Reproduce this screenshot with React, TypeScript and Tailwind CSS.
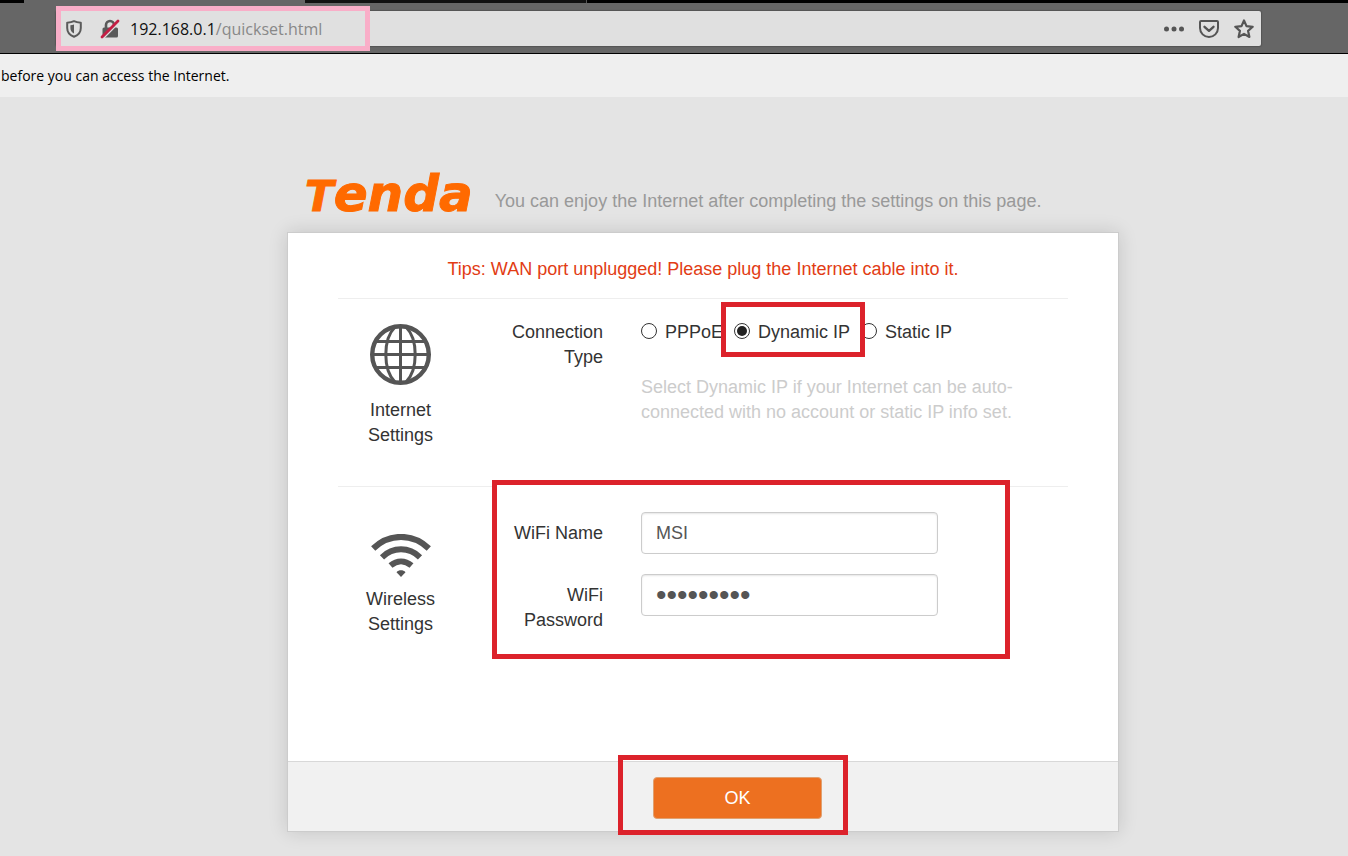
import { useState } from "react";
import type { ReactNode } from "react";

const CONNECTION_TYPES = ["PPPoE", "Dynamic IP", "Static IP"];

function ShieldIcon() {
  return (
    <svg width="16" height="18" viewBox="0 0 16 18" fill="none" aria-hidden="true">
      <path d="M8 1.2C6 2.2 3.8 2.6 1.2 2.7V8c0 4.200 2.600 7.200 6.800 8.800 4.200-1.600 6.800-4.600 6.800-8.800V2.700C12.200 2.600 10 2.200 8 1.200Z" stroke="#5a5a5a" strokeWidth="2" strokeLinejoin="round" />
      <path d="M8 4.500v9c-2.400-1.300-3.600-3.100-3.600-5.500V5.300C5.700 5.200 6.900 4.900 8 4.500Z" fill="#5a5a5a" />
    </svg>
  );
}

function InsecureLockIcon() {
  return (
    <svg width="20" height="20" viewBox="0 0 20 20" fill="none" aria-hidden="true">
      <path d="M6 9V6a4 4 0 0 1 8 0v3" stroke="#5a5a5a" strokeWidth="2.600" />
      <rect x="2.500" y="8.500" width="15.500" height="10" rx="1.500" fill="#5a5a5a" />
      <path d="M3 19.700 19.700 3" stroke="#e0e0e0" strokeWidth="1.600" />
      <path d="M2 18 18 2" stroke="#c41e44" strokeWidth="2.800" strokeLinecap="round" />
    </svg>
  );
}

function PocketIcon() {
  return (
    <svg width="20" height="18" viewBox="0 0 20 18" fill="none" stroke="#555" strokeWidth="2" strokeLinecap="round" strokeLinejoin="round" aria-hidden="true">
      <path d="M2 1h16c.6 0 1 .4 1 1V8a9 9 0 0 1-18 0V2c0-.6.4-1 1-1Z" />
      <path d="m5.500 6.800 4.500 4 4.500-4" strokeWidth="2.400" />
    </svg>
  );
}

function StarIcon() {
  return (
    <svg width="20" height="20" viewBox="0 0 20 20" fill="none" stroke="#555" strokeWidth="2.200" strokeLinejoin="round" aria-hidden="true">
      <path d="m10 1.500 2.500 5.600 6.200.7-4.600 4.100 1.300 6.100L10 14.900 4.600 18l1.300-6.100L1.300 7.800l6.200-.7Z" />
    </svg>
  );
}

function GlobeIcon() {
  return (
    <svg width="61" height="61" viewBox="0 0 61 61" fill="none" stroke="#555" strokeWidth="3" aria-hidden="true">
      <circle cx="30.500" cy="30.500" r="28.300" strokeWidth="4.400" />
      <path d="M30.500 2v57M2 30.500h57M6 17.500h49M6 43.500h49" />
      <path d="M25 3C18 10 15.800 20 15.800 30.500S18 51 25 58M36 3c7 7 9.200 17 9.200 27.500S43 51 36 58" />
    </svg>
  );
}

function WifiIcon() {
  return (
    <svg width="60" height="43" viewBox="0 0 60 43" fill="none" stroke="#555" strokeWidth="6" aria-hidden="true">
      <path d="M2.200 14.500C18-1 42-1 57.800 14.500" />
      <path d="M11 23.300c11-10.600 27-10.600 38 0" />
      <path d="M19.500 31.500c6.500-5.500 14.500-5.500 21 0" />
      <path d="M25.500 38.300c2.300-2.600 6.700-2.600 9 0L30 43Z" fill="#555" stroke="none" />
    </svg>
  );
}

function Highlight({ className }: { className: string }) {
  return <span aria-hidden="true" className={`pointer-events-none absolute border-5 ${className}`} />;
}

function BrowserBar() {
  return (
    <header className="border-b border-black bg-[#666]">
      <div className="flex h-[3px]">
        <div className="w-6 bg-black" />
        <div className="w-[281px]" />
        <div className="w-[282px] border-r border-[#555] bg-[#111]" />
        <div className="flex-1 bg-black" />
      </div>
      <div className="pt-2 pr-[87px] pb-[7px] pl-14">
        <div className="relative flex h-[35px] items-center rounded-xs bg-[#e0e0e0] pr-[7px] pl-2.5 shadow-[0_0_1px_1px_#555]">
          <Highlight className="-top-[5px] left-0 h-[45px] w-[314px] border-[#f9aec8]" />
          <ShieldIcon />
          <div className="ml-[18px] flex">
            <InsecureLockIcon />
          </div>
          <p className="ml-2.5 flex-1 pt-px font-['Open_Sans','Noto_Sans',sans-serif] text-base text-[#111]">
            192.168.0.1<span className="text-[#888]">/quickset.html</span>
          </p>
          <div className="flex items-center gap-[15px]">
            <button aria-label="Page actions" className="flex">
              <svg width="20" height="6" viewBox="0 0 20 6" fill="#555" aria-hidden="true">
                <circle cx="2.500" cy="3" r="2.500" />
                <circle cx="10" cy="3" r="2.500" />
                <circle cx="17.500" cy="3" r="2.500" />
              </svg>
            </button>
            <button aria-label="Save to Pocket" className="flex"><PocketIcon /></button>
            <button aria-label="Bookmark this page" className="flex"><StarIcon /></button>
          </div>
        </div>
      </div>
    </header>
  );
}

function Section({ icon, title, children }: { icon: ReactNode; title: ReactNode; children: ReactNode }) {
  return (
    <section className="mx-[50px] flex border-t border-[#eee]">
      <div className="flex w-[125px] shrink-0 flex-col items-center text-center">
        {icon}
        <h2>{title}</h2>
      </div>
      {children}
    </section>
  );
}

export default function App() {
  const [connection, setConnection] = useState("Dynamic IP");
  const [wifiName, setWifiName] = useState("MSI");
  const [wifiPassword, setWifiPassword] = useState("123456789");

  return (
    <div className="min-h-screen bg-[#e4e4e4] font-['Liberation_Sans',Arial,sans-serif] text-lg/[25px] text-[#333]">
      <BrowserBar />

      <div className="bg-[#efefef] px-px py-[11px] font-['Open_Sans','Noto_Sans',sans-serif] text-sm/[21px] text-black">
        before you can access the Internet.
      </div>

      <main className="pt-[68px] pb-6 pl-[58px]">
        <div className="mx-auto max-w-[832px]">
          {/* Logo and intro */}
          <div className="flex items-start gap-[22px] pl-[18px]">
            <h1 className="font-['DejaVu_Sans',sans-serif] text-[50px]/[58px] font-bold text-[#ff6a00] italic [-webkit-text-stroke:1px_#ff6a00]">
              <span className="text-[42px]/[42px]">T</span>enda
            </h1>
            <p className="pt-6 text-[#999]">You can enjoy the Internet after completing the settings on this page.</p>
          </div>

          <form
            onSubmit={(e) => e.preventDefault()}
            className="mt-[9px] border border-[#ccc] bg-white shadow-[0_0_18px_rgba(0,0,0,0.14)]"
          >
            <p className="pt-6 pb-4 text-center text-[#e23c14]">
              Tips: WAN port unplugged! Please plug the Internet cable into it.
            </p>

            <Section
              icon={<div className="pt-[25px] pb-[13px]"><GlobeIcon /></div>}
              title={<>Internet<br />Settings</>}
            >
              <fieldset className="flex flex-1 pt-[21px] pb-[61px]">
                <div className="mr-[38px] ml-10 w-[100px] shrink-0 text-right" id="connection-type">
                  Connection Type
                </div>
                <div className="flex-1" role="radiogroup" aria-labelledby="connection-type">
                  <div className="flex gap-[11px] whitespace-nowrap">
                    {CONNECTION_TYPES.map((type) => (
                      <label key={type} className="relative flex items-start gap-2">
                        <input
                          type="radio"
                          name="connection"
                          value={type}
                          checked={connection === type}
                          onChange={() => setConnection(type)}
                          className="mt-[3px] size-4 appearance-none rounded-full border border-[#333] bg-white bg-clip-content p-0.5 checked:bg-[#222]"
                        />
                        {type}
                        {type === "Dynamic IP" && (
                          <Highlight className="-top-[18px] -left-[13px] z-10 h-[55px] w-36 border-[#dc222b]" />
                        )}
                      </label>
                    ))}
                  </div>
                  <p className="mt-[30px] max-w-[380px] text-[#ccc]">
                    Select Dynamic IP if your Internet can be auto-connected with no account or static IP info set.
                  </p>
                </div>
              </fieldset>
            </Section>

            <Section
              icon={<div className="pt-[47px] pb-2.5"><WifiIcon /></div>}
              title={<>Wireless<br />Settings</>}
            >
              <div className="relative flex-1 pt-[25px] pb-[145px]">
                <Highlight className="-top-[7px] left-[29px] h-[179px] w-[518px] border-[#dc222b] bg-white" />
                <div className="relative space-y-5">
                  <div className="flex h-[42px]">
                    <label htmlFor="wifi-name" className="mr-[38px] ml-10 w-[100px] pt-[9px] text-right">
                      WiFi Name
                    </label>
                    <input
                      id="wifi-name"
                      type="text"
                      value={wifiName}
                      onChange={(e) => setWifiName(e.target.value)}
                      className="w-[297px] rounded-sm border border-[#ccc] bg-white px-3.5 text-[#555] shadow-[inset_0_1px_2px_rgba(0,0,0,0.1)]"
                    />
                  </div>
                  <div className="flex h-[42px]">
                    <label htmlFor="wifi-password" className="mr-[38px] ml-10 w-[100px] pt-[9px] text-right">
                      WiFi Password
                    </label>
                    <input
                      id="wifi-password"
                      type="password"
                      value={wifiPassword}
                      onChange={(e) => setWifiPassword(e.target.value)}
                      className="w-[297px] rounded-sm border border-[#ccc] bg-white px-3.5 text-[30px] text-[#555] shadow-[inset_0_1px_2px_rgba(0,0,0,0.1)]"
                    />
                  </div>
                </div>
              </div>
            </Section>

            <div className="border-t border-[#d8d8d8] bg-[#f1f1f1] pt-[15px] pb-3 pl-[365px]">
              <div className="relative w-[169px]">
                <button type="submit" className="h-[42px] w-full rounded-sm border border-[#e0a070] bg-[#ed7020] text-white">
                  OK
                </button>
                <Highlight className="-top-[22px] -left-[35px] h-20 w-[230px] border-[#dc222b]" />
              </div>
            </div>
          </form>
        </div>
      </main>
    </div>
  );
}
